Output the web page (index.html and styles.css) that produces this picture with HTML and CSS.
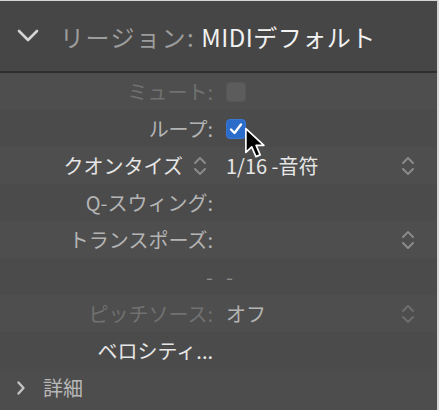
FILE: index.html
```html
<!doctype html>
<html lang="ja">

<head>
    <meta charset="UTF-8" />
    <meta name="viewport" content="width=device-width, initial-scale=1.0" />
    <title>リージョン: MIDIデフォルト</title>
    <link rel="stylesheet" href="styles.css">
</head>

<body>
    <div class="panel">
        <div class="header">
            <svg class="chev-down" width="22" height="14" viewBox="0 0 22 14">
                <path d="M2 2 L11 11 L20 2" fill="none" stroke="#d4d4d4" stroke-width="2.6" stroke-linecap="round" stroke-linejoin="round" />
            </svg>
            <span class="title-key">リージョン:</span>
            <span class="title-val">MIDIデフォルト</span>
        </div>

        <div class="row">
            <div class="label dim">ミュート:</div>
            <div class="value"><span class="check"></span></div>
        </div>

        <div class="row alt">
            <div class="label">ループ:</div>
            <div class="value">
                <span class="check on">
                    <svg width="20" height="20" viewBox="0 0 20 20">
                        <path d="M5 10.5 L8.5 14 L15 5.5" fill="none" stroke="#fff" stroke-width="2.4" stroke-linecap="round" stroke-linejoin="round" />
                    </svg>
                </span>
            </div>
        </div>

        <div class="row">
            <div class="label bright">クオンタイズ
                <svg class="stepper inline" width="14" height="22" viewBox="0 0 14 22">
                    <path d="M2 8 L7 3 L12 8 M2 14 L7 19 L12 14" fill="none" stroke="#8a8a8a" stroke-width="2" stroke-linecap="round" stroke-linejoin="round" />
                </svg>
            </div>
            <div class="value bright">1/16 -音符</div>
            <svg class="stepper" width="14" height="22" viewBox="0 0 14 22">
                <path d="M2 8 L7 3 L12 8 M2 14 L7 19 L12 14" fill="none" stroke="#8a8a8a" stroke-width="2" stroke-linecap="round" stroke-linejoin="round" />
            </svg>
        </div>

        <div class="row alt">
            <div class="label">Q-スウィング:</div>
            <div class="value"></div>
        </div>

        <div class="row">
            <div class="label">トランスポーズ:</div>
            <div class="value"></div>
            <svg class="stepper" width="14" height="22" viewBox="0 0 14 22">
                <path d="M2 8 L7 3 L12 8 M2 14 L7 19 L12 14" fill="none" stroke="#8a8a8a" stroke-width="2" stroke-linecap="round" stroke-linejoin="round" />
            </svg>
        </div>

        <div class="row alt">
            <div class="label faint">-</div>
            <div class="value faint">-</div>
        </div>

        <div class="row">
            <div class="label dim">ピッチソース:</div>
            <div class="value">オフ</div>
            <svg class="stepper" width="14" height="22" viewBox="0 0 14 22">
                <path d="M2 8 L7 3 L12 8 M2 14 L7 19 L12 14" fill="none" stroke="#6e6e6e" stroke-width="2" stroke-linecap="round" stroke-linejoin="round" />
            </svg>
        </div>

        <div class="row alt">
            <div class="label bright">ベロシティ...</div>
            <div class="value"></div>
        </div>

        <div class="footer">
            <svg class="chev-right" width="10" height="16" viewBox="0 0 10 16">
                <path d="M2.5 2.5 L7.5 8 L2.5 13.5" fill="none" stroke="#c4c4c4" stroke-width="2.4" stroke-linecap="round" stroke-linejoin="round" />
            </svg>
            <span>詳細</span>
        </div>

        <svg class="cursor" width="26" height="36" viewBox="0 0 24 34">
            <path d="M1.5 1.5 L1.5 24 L7 18.8 L11 28 L15 26.3 L11.2 17.3 L18.5 17.3 Z" fill="#000" stroke="#fff" stroke-width="1.6" stroke-linejoin="round" />
        </svg>
    </div>
</body>

</html>
```

FILE: styles.css
```css
body {
    margin: 0;
    background: #d6d6d6;
    font-family: "Noto Sans CJK JP", "Noto Sans", sans-serif;
}

.panel {
    position: relative;
    width: 437px;
    height: 409px;
    margin-top: 1px;
    background: #4d4d4d;
    overflow: hidden;
}

.header {
    display: flex;
    align-items: center;
    height: 70px;
    padding-left: 17px;
    background: #464646;
    border-bottom: 2px solid #2f2f2f;
    font-size: 24px;
    letter-spacing: 1.5px;
}

.chev-down {
    margin-right: 21px;
}

.title-key {
    color: #9c9c9c;
    margin-right: 6px;
}

.title-val {
    color: #f2f2f2;
    letter-spacing: 0.5px;
}

.row {
    display: grid;
    grid-template-columns: 213px 1fr 14px;
    column-gap: 13px;
    align-items: center;
    height: 37px;
    padding-right: 22px;
    background: #4e4e4e;
    font-size: 20px;
    color: #b4b4b4;
}

.row.alt {
    background: #4b4b4b;
}

.label {
    display: flex;
    align-items: center;
    justify-content: flex-end;
    white-space: nowrap;
}

.value {
    display: flex;
    align-items: center;
    white-space: nowrap;
}

.dim {
    color: #717171;
}

.faint {
    color: #8a8a8a;
}

.bright {
    color: #e6e6e6;
}

.stepper {
    display: block;
}

.stepper.inline {
    margin-left: 10px;
    margin-right: 6px;
}

.check {
    display: block;
    width: 20px;
    height: 20px;
    box-sizing: border-box;
    border-radius: 4px;
    background: #5c5c5c;
    border: 1px solid #565656;
}

.check.on {
    background: #2b6ccb;
    border-color: #3977d4;
}

.check svg {
    display: block;
    margin: -1px;
}

.footer {
    display: flex;
    align-items: center;
    height: 37px;
    padding-left: 16px;
    font-size: 20px;
    color: #b8b8b8;
}

.chev-right {
    margin-right: 17px;
}

.cursor {
    position: absolute;
    left: 244px;
    top: 126px;
}
```
